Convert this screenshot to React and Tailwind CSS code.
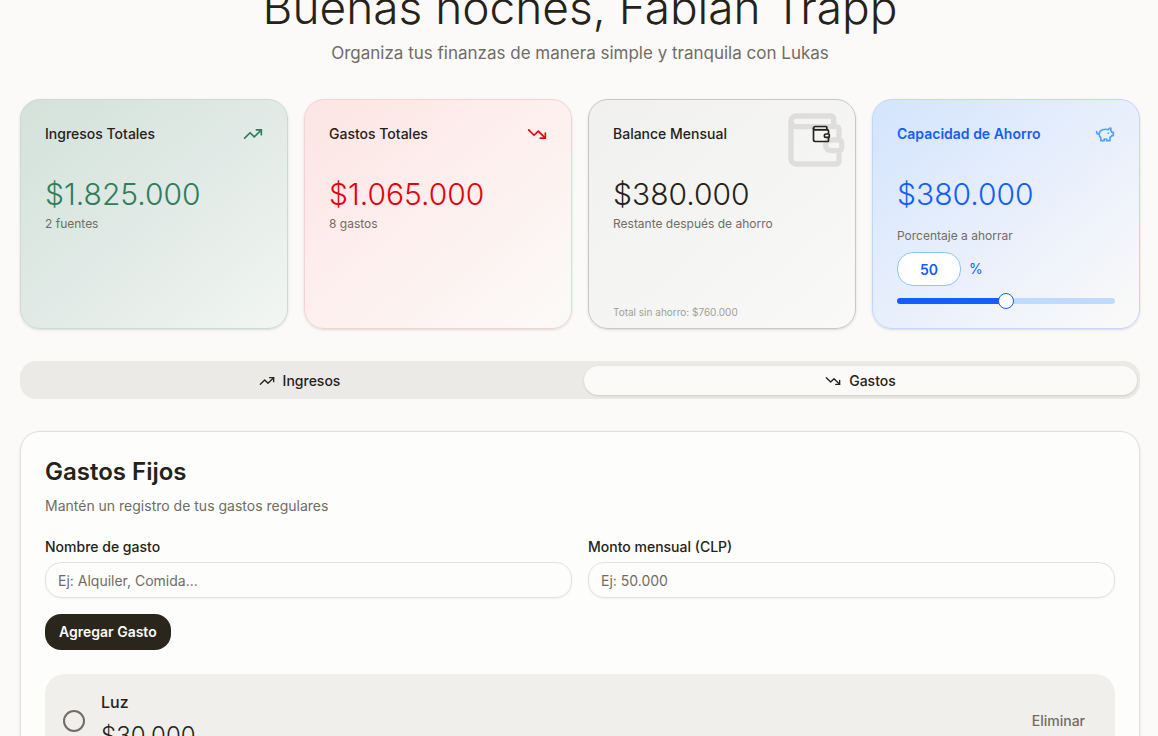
import React, { useState } from 'react';
import { TrendingUp, TrendingDown, Wallet } from 'lucide-react';

const formatCLP = (value) => '$' + String(value).replace(/\B(?=(\d{3})+(?!\d))/g, '.');

const INGRESOS = 1825000;
const GASTOS = 1065000;

function PiggyIcon({ className }) {
  return (
    <svg
      viewBox="0 0 24 24"
      fill="none"
      stroke="currentColor"
      strokeWidth={2}
      strokeLinecap="round"
      strokeLinejoin="round"
      className={className}
      aria-hidden="true"
    >
      <path d="M19 5c-1.5 0-2.8 1.4-3 2-3.5-1.5-11-.3-11 5 0 1.8 0 3 2 4.5V20h4v-2h3v2h4v-4c1-.5 1.7-1 2-2h2v-4h-2c0-1-.5-1.5-1-2V5z" />
      <path d="M2 9v1c0 1.1.9 2 2 2h1" />
      <path d="M16 11h.01" />
    </svg>
  );
}

function SummaryCard({ title, icon, amount, className, titleClass = '', amountClass, children }) {
  return (
    <section className={`flex min-h-[230px] flex-col rounded-[20px] border px-6 pt-6 shadow-sm ${className}`}>
      <div className="flex items-center justify-between">
        <h2 className={`text-sm ${titleClass}`}>{title}</h2>
        {icon}
      </div>
      <p className={`mt-8 text-3xl font-light ${amountClass}`}>{amount}</p>
      {children}
    </section>
  );
}

function TabButton({ active, onClick, icon, label }) {
  return (
    <button
      type="button"
      role="tab"
      aria-selected={active}
      onClick={onClick}
      className={`flex flex-1 items-center justify-center gap-2 rounded-2xl text-sm font-medium ${
        active ? 'bg-[#fbfaf8] shadow-sm' : ''
      }`}
    >
      {icon}
      {label}
    </button>
  );
}

function Field({ id, label, placeholder }) {
  return (
    <div className="flex flex-col gap-2">
      <label htmlFor={id} className="text-sm leading-[14px] font-medium">{label}</label>
      <input
        id={id}
        type="text"
        placeholder={placeholder}
        className="h-9 w-full rounded-2xl border border-[#e2e1de] bg-transparent px-3 text-sm shadow-xs outline-none placeholder:text-[#716c64]"
      />
    </div>
  );
}

function ExpenseRow({ name, amount }) {
  return (
    <li className="flex items-center gap-4 rounded-[20px] bg-[#f0efec] p-4">
      <input
        type="checkbox"
        aria-label={`Marcar ${name} como pagado`}
        className="ml-0.5 size-[22px] shrink-0 appearance-none rounded-full border-2 border-[#716c64] checked:bg-[#716c64]"
      />
      <div className="flex-1">
        <p className="font-medium">{name}</p>
        <p className="mt-1.5 text-2xl font-light">{formatCLP(amount)}</p>
      </div>
      <button type="button" className="h-8 rounded-2xl px-3.5 text-sm font-medium text-[#716c64]">
        Eliminar
      </button>
    </li>
  );
}

export default function App() {
  const [tab, setTab] = useState('gastos');
  const [percent, setPercent] = useState(50);

  const total = INGRESOS - GASTOS;
  const ahorro = Math.round((total * percent) / 100);

  return (
    <div className="min-h-screen overflow-hidden bg-[#fbfaf8] pr-[18px] pl-5 font-['Inter','Liberation_Sans',sans-serif] text-[#262219]">
      <header className="-mt-[17px] text-center">
        <h1 className="text-[46px] leading-[48px] font-light">Buenas noches, Fabian Trapp</h1>
        <p className="mt-2 text-[17px] leading-7 text-[#716c64]">
          Organiza tus finanzas de manera simple y tranquila con Lukas
        </p>
      </header>

      {/* Resumen */}
      <div className="mt-8 grid grid-cols-4 gap-4">
        <SummaryCard
          title="Ingresos Totales"
          titleClass="font-medium"
          icon={<TrendingUp className="size-5 text-[#2f7d5b]" />}
          amount={formatCLP(INGRESOS)}
          amountClass="text-[#2f7d5b]"
          className="border-[#c9dbd2] bg-linear-to-br from-[#d3e2da] via-[#e1eae6] to-[#f2f6f2]"
        >
          <p className="mt-1 text-xs text-[#716c64]">2 fuentes</p>
        </SummaryCard>

        <SummaryCard
          title="Gastos Totales"
          titleClass="font-medium"
          icon={<TrendingDown className="size-5 text-[#e7000b]" />}
          amount={formatCLP(GASTOS)}
          amountClass="text-[#e7000b]"
          className="border-[#f8d2d2] bg-linear-to-br from-[#fce5e4] via-[#fdf0ee] to-[#fbfaf8]"
        >
          <p className="mt-1 text-xs text-[#716c64]">8 gastos</p>
        </SummaryCard>

        <SummaryCard
          title="Balance Mensual"
          titleClass="font-medium"
          icon={<Wallet className="size-5" />}
          amount={formatCLP(total - ahorro)}
          amountClass=""
          className="relative border-[#c8c7c4] bg-linear-to-br from-[#f0f0ee] to-[#f9f9f8]"
        >
          <Wallet className="absolute top-2 right-2 size-16 opacity-10" aria-hidden="true" />
          <p className="mt-1 text-xs text-[#716c64]">Restante después de ahorro</p>
          <p className="mt-auto pb-2 text-[10px] leading-4 text-[#a19e98]">
            Total sin ahorro: {formatCLP(total)}
          </p>
        </SummaryCard>

        <SummaryCard
          title="Capacidad de Ahorro"
          titleClass="font-semibold text-[#155dfc]"
          icon={<PiggyIcon className="size-5 text-[#51a2ff]" />}
          amount={formatCLP(ahorro)}
          amountClass="text-[#155dfc]"
          className="border-[#bdd7ff] bg-linear-to-br from-[#d3e4fd] via-[#e8effc] to-[#fbfaf8]"
        >
          <label htmlFor="porcentaje" className="mt-4 text-xs text-[#716c64]">Porcentaje a ahorrar</label>
          <div className="mt-2 flex items-center gap-2">
            <input
              id="porcentaje"
              type="text"
              inputMode="numeric"
              value={percent}
              onChange={(e) => setPercent(Math.min(100, Number(e.target.value) || 0))}
              className="h-[34px] w-16 rounded-2xl border border-[#8ec5ff] bg-white text-center text-sm font-semibold text-[#155dfc] outline-none"
            />
            <span className="text-sm text-[#155dfc]">%</span>
          </div>
          <input
            type="range"
            min="0"
            max="100"
            value={percent}
            onChange={(e) => setPercent(Number(e.target.value))}
            aria-label="Porcentaje a ahorrar"
            style={{ backgroundImage: `linear-gradient(to right, #155dfc ${percent}%, #bedbff ${percent}%)` }}
            className="mt-3 h-1.5 w-full appearance-none rounded-full [&::-webkit-slider-thumb]:size-4 [&::-webkit-slider-thumb]:appearance-none [&::-webkit-slider-thumb]:rounded-full [&::-webkit-slider-thumb]:border [&::-webkit-slider-thumb]:border-[#155dfc] [&::-webkit-slider-thumb]:bg-white"
          />
        </SummaryCard>
      </div>

      {/* Pestañas */}
      <div role="tablist" className="mt-8 flex h-[38px] gap-2 rounded-2xl bg-[#ebeae7] px-[3px] pt-[5px] pb-1">
        <TabButton
          active={tab === 'ingresos'}
          onClick={() => setTab('ingresos')}
          icon={<TrendingUp className="size-4" />}
          label="Ingresos"
        />
        <TabButton
          active={tab === 'gastos'}
          onClick={() => setTab('gastos')}
          icon={<TrendingDown className="size-4" />}
          label="Gastos"
        />
      </div>

      {/* Gastos fijos */}
      <section className="mt-8 rounded-[20px] border border-[#e2e1de] bg-[#fdfdfb] p-6 shadow-sm">
        <h2 className="text-2xl font-semibold">Gastos Fijos</h2>
        <p className="mt-2 text-sm text-[#716c64]">Mantén un registro de tus gastos regulares</p>

        <form className="mt-6" onSubmit={(e) => e.preventDefault()}>
          <div className="grid grid-cols-2 gap-4">
            <Field id="nombre" label="Nombre de gasto" placeholder="Ej: Alquiler, Comida..." />
            <Field id="monto" label="Monto mensual (CLP)" placeholder="Ej: 50.000" />
          </div>
          <button
            type="submit"
            className="mt-4 h-9 rounded-2xl bg-[#2b261c] px-3.5 text-sm font-semibold text-[#fbfaf8]"
          >
            Agregar Gasto
          </button>
        </form>

        <ul className="mt-6 flex flex-col gap-3">
          <ExpenseRow name="Luz" amount={30000} />
        </ul>
      </section>
    </div>
  );
}
